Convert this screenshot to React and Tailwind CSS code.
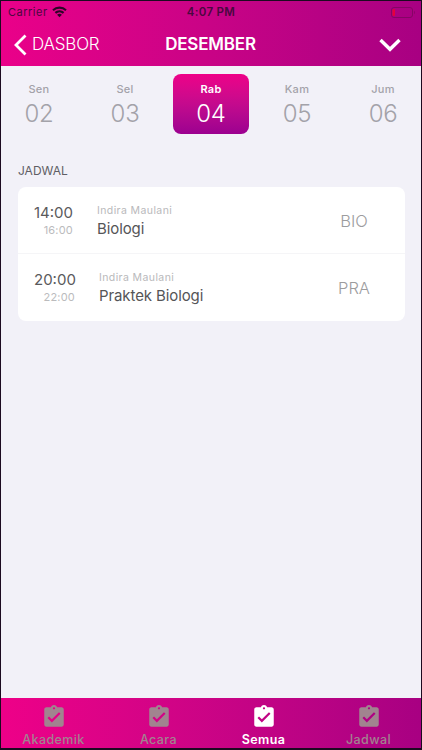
import { MdAssignmentTurnedIn } from "react-icons/md";

const days = [
  { name: "Sen", date: "02" },
  { name: "Sel", date: "03" },
  { name: "Rab", date: "04", active: true },
  { name: "Kam", date: "05" },
  { name: "Jum", date: "06" },
];

const schedules = [
  {
    start: "14:00",
    end: "16:00",
    teacher: "Indira Maulani",
    subject: "Biologi",
    code: "BIO",
    timeWidth: "w-[39px]",
  },
  {
    start: "20:00",
    end: "22:00",
    teacher: "Indira Maulani",
    subject: "Praktek Biologi",
    code: "PRA",
    timeWidth: "w-[41px]",
  },
];

const tabs = [
  { label: "Akademik" },
  { label: "Acara" },
  { label: "Semua", active: true },
  { label: "Jadwal" },
];

const StatusBar = () => {
  return (
    <div className="grid grid-cols-3 items-center h-[22px] pl-[7px] pr-[5px] text-[11px] text-[#4a0840]">
      <div className="flex items-center gap-[4px]">
        <span className="tracking-[0.5px]">Carrier</span>
        <svg width="15" height="12" viewBox="0 0 15 12" fill="none" className="text-[#2a0526]">
          <path
            d="M1 4.2C4.6 0.8 10.4 0.8 14 4.2M3.4 6.9C5.7 4.8 9.3 4.8 11.6 6.9"
            stroke="currentColor"
            strokeWidth="2.1"
          />
          <path d="M5.1 8.7C6.5 7.5 8.5 7.5 9.9 8.7L7.5 11.3Z" fill="currentColor" />
        </svg>
      </div>
      <span className="pt-px pr-[2px] text-center text-[11.5px] font-semibold tracking-[0.3px] whitespace-nowrap">
        4:07 PM
      </span>
      <div className="flex justify-end">
        <svg width="25" height="11" viewBox="0 0 25 11" fill="none">
          <rect x="0.5" y="0.5" width="21" height="10" rx="2.5" stroke="#850565" />
          <rect x="1.5" y="2" width="2.5" height="7" rx="1" fill="#e5003c" />
          <path d="M23.2 3.8C24.3 4.3 24.3 6.7 23.2 7.2Z" fill="#850565" />
        </svg>
      </div>
    </div>
  );
};

const App = () => {
  return (
    <div className="flex flex-col w-[422px] h-[750px] border-t border-l border-r border-b-2 border-[#1c0a20] bg-[#f2f1f8] font-['Inter','Liberation_Sans',sans-serif] overflow-hidden">
      {/* header */}
      <header className="h-[65px] shrink-0 bg-linear-to-r from-[#ea0089] to-[#a80082]">
        <StatusBar />
        <div className="grid grid-cols-3 items-center h-[43px] pl-[13px] pr-[20px] text-white">
          <div className="flex items-center gap-[5px]">
            <svg width="13" height="22" viewBox="0 0 13 22" fill="none">
              <path d="M11.5 1.5L2 11L11.5 20.5" stroke="currentColor" strokeWidth="2.8" />
            </svg>
            <span className="text-[17px] font-[350] tracking-[-0.2px]">DASBOR</span>
          </div>
          <h1 className="pl-[6px] text-center text-[17px] font-semibold tracking-[-0.2px]">
            DESEMBER
          </h1>
          <div className="flex justify-end">
            <svg width="22" height="14" viewBox="0 0 22 14" fill="none">
              <path d="M1.5 2L11 11.3L20.5 2" stroke="currentColor" strokeWidth="3.4" />
            </svg>
          </div>
        </div>
      </header>

      {/* day picker */}
      <div className="flex gap-[10px] pt-2">
        {days.map((day) => (
          <div
            key={day.date}
            className={`flex flex-col items-center w-[76px] h-[60px] pt-2 rounded-lg ${
              day.active
                ? "bg-linear-to-b from-[#ee0088] to-[#9c0090] text-white"
                : "text-[#a3a2a9]"
            }`}
          >
            <span
              className={`text-[11px] leading-[15px] tracking-[0.3px] ${
                day.active ? "font-semibold" : "font-medium"
              }`}
            >
              {day.name}
            </span>
            <span className="mt-[2px] text-[24px] font-[350] leading-[29px] tracking-[-0.3px]">
              {day.date}
            </span>
          </div>
        ))}
      </div>

      {/* schedule list */}
      <main className="flex-1 px-[17px] pt-[28px]">
        <h2 className="text-[12px] leading-[18px] text-[#5f5e64]">JADWAL</h2>
        <div className="w-[387px] mt-[7px] rounded-lg bg-white divide-y divide-[#f5f5f7]">
          {schedules.map((item) => (
            <div key={item.code} className="flex h-[67px] pl-4">
              <div className={`pt-4 text-right ${item.timeWidth}`}>
                <p className="text-[15px] leading-5 whitespace-nowrap text-[#5a5a5c]">{item.start}</p>
                <p className="text-[11px] leading-[15px] tracking-[0.2px] text-[#bbbbbd]">
                  {item.end}
                </p>
              </div>
              <div className="flex-1 pt-4 pl-[24px]">
                <p className="text-[10.5px] leading-[15px] tracking-[0.4px] text-[#b9b9bb]">
                  {item.teacher}
                </p>
                <p className="text-[15px] leading-[22px] tracking-[-0.1px] text-[#555557]">
                  {item.subject}
                </p>
              </div>
              <div className="flex items-center justify-center w-[102px] pt-[2px] text-[16.5px] font-[350] text-[#9c9c9e]">
                {item.code}
              </div>
            </div>
          ))}
        </div>
      </main>

      {/* bottom tabs */}
      <nav className="grid grid-cols-4 h-[50px] shrink-0 bg-linear-to-r from-[#ee0088] to-[#a80082]">
        {tabs.map((tab) => (
          <div
            key={tab.label}
            className={`flex flex-col items-center pt-[6px] ${
              tab.active ? "text-white" : "text-[#a1848f]"
            }`}
          >
            <MdAssignmentTurnedIn size={26} />
            <span
              className={`mt-[2px] text-[12.5px] leading-4 tracking-[0.4px] ${
                tab.active ? "font-semibold" : "font-medium"
              }`}
            >
              {tab.label}
            </span>
          </div>
        ))}
      </nav>
    </div>
  );
};

export default App;
